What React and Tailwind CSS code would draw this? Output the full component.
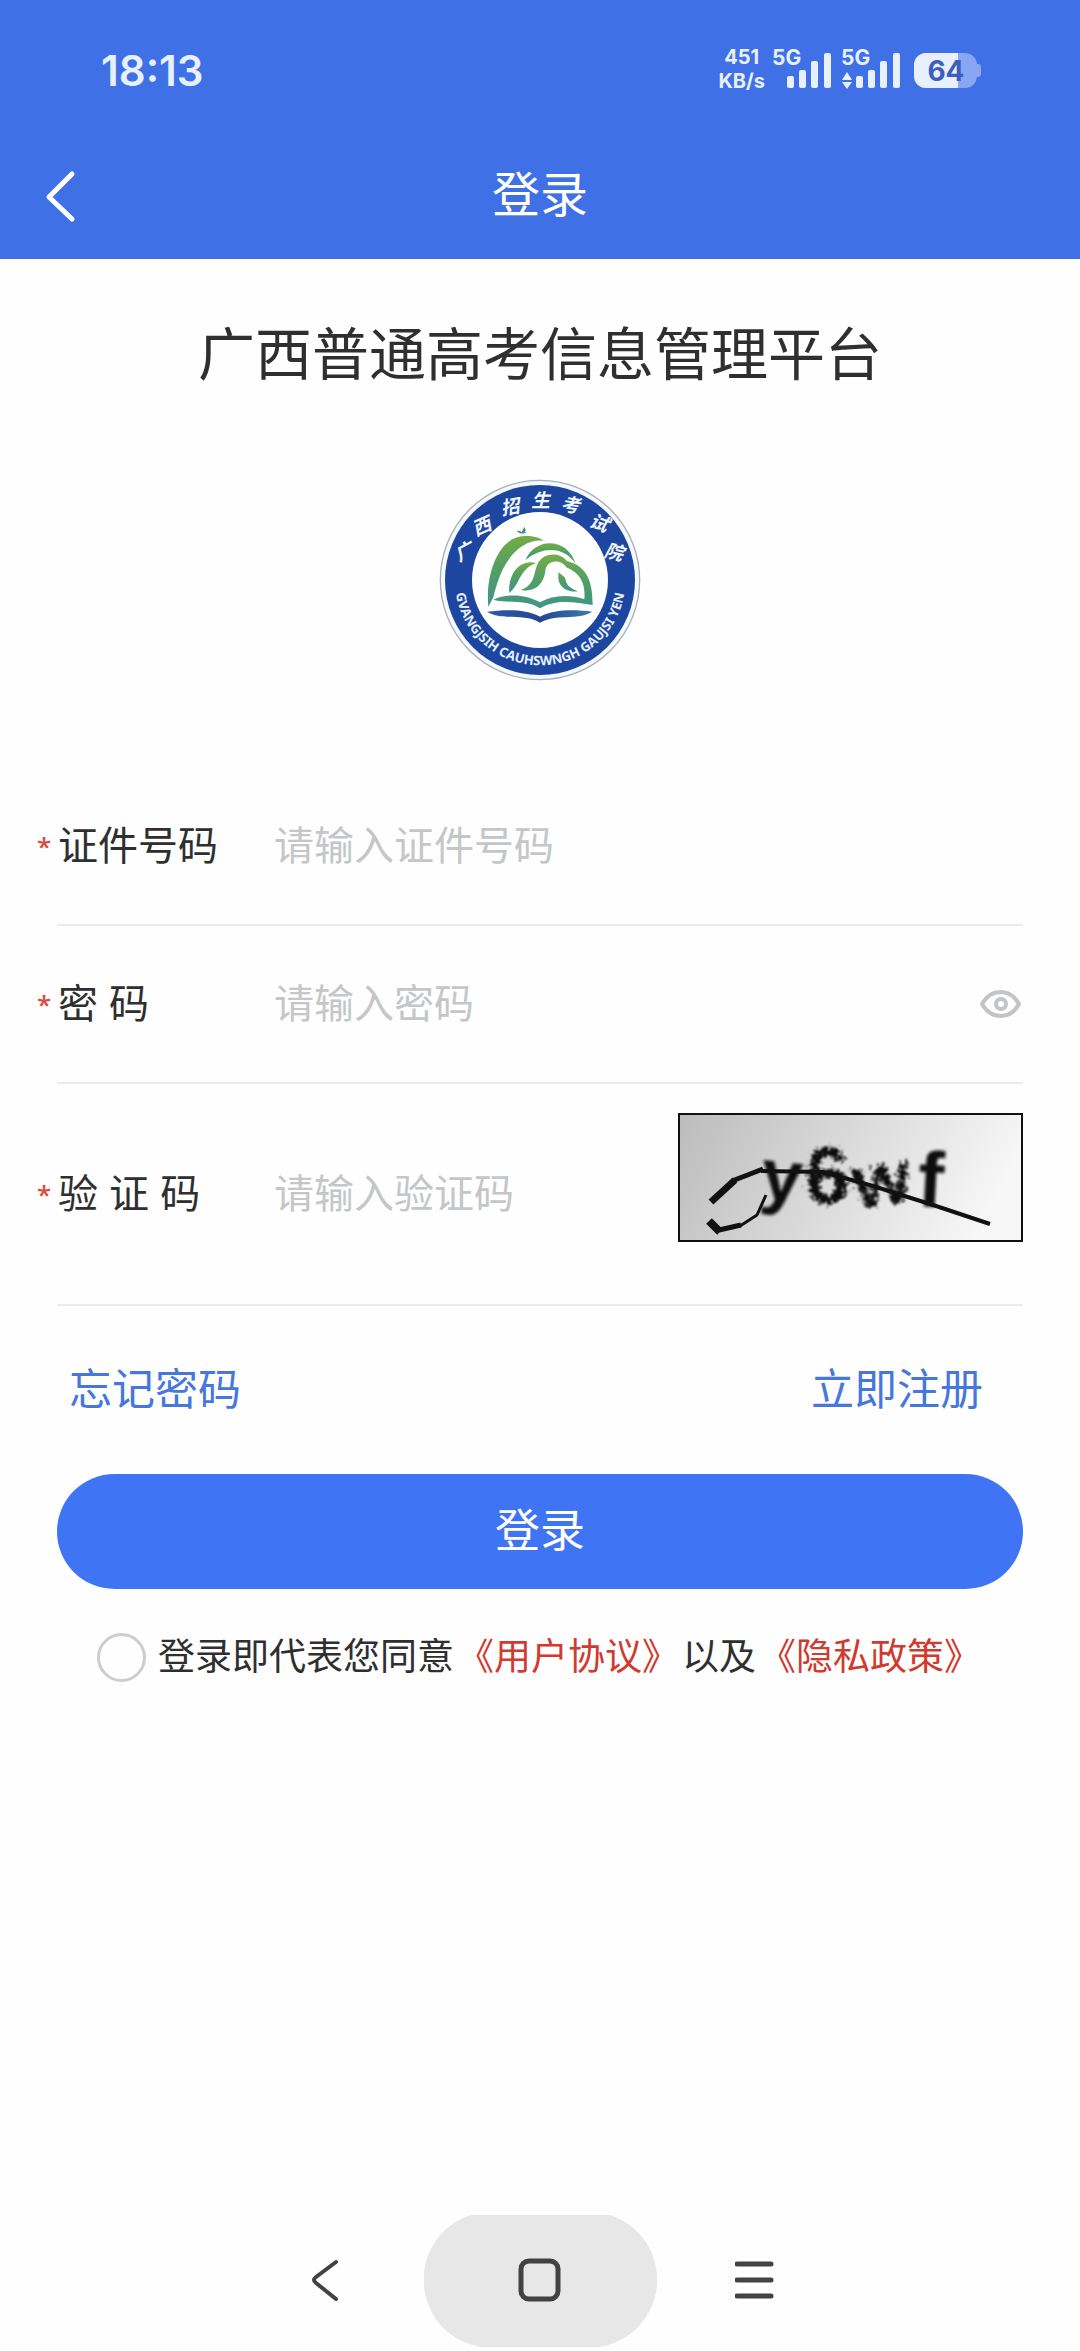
import React, { useState } from "react"

const EMBLEM_CHARS = [
  { char: "广", x: 133, y: 276, rotate: -28 },
  { char: "西", x: 186, y: 200, rotate: -24 },
  { char: "招", x: 271, y: 142, rotate: -10 },
  { char: "生", x: 363, y: 121, rotate: 0 },
  { char: "考", x: 452, y: 136, rotate: 8 },
  { char: "试", x: 538, y: 190, rotate: 20 },
  { char: "院", x: 583, y: 277, rotate: 14 },
]

function Signal({ active }) {
  return (
    <svg viewBox="0 0 62 44" className="h-11 w-[62px]" fill="#e8f0ff" aria-hidden="true">
      <text x="0" y="20" fontSize="21" fontWeight="700" fontFamily="Inter, sans-serif">5G</text>
      {active && <path d="M6 27l5 8H1zM6 44l-5-7h10z" />}
      <rect x="15" y="31" width="7" height="12" rx="2" />
      <rect x="27" y="25" width="7" height="18" rx="2" />
      <rect x="39" y="16" width="7" height="27" rx="2" />
      <rect x="52" y="8" width="7" height="35" rx="2" />
    </svg>
  )
}

function Battery() {
  return (
    <svg viewBox="0 -8 68 44" className="ml-1 h-11 w-[68px]" aria-hidden="true">
      <rect x="60" y="11" width="7" height="13" rx="3" fill="#89a6f2" />
      <rect x="0" y="0" width="63" height="35" rx="12" fill="#89a6f2" />
      <path d="M12 0h32v35H12A12 12 0 0 1 0 23V12A12 12 0 0 1 12 0z" fill="#e8f0ff" />
      <text x="32" y="28" textAnchor="middle" fontSize="28" fontWeight="700" fontFamily="Inter, sans-serif" fill="#3c5fbd">64</text>
    </svg>
  )
}

function Emblem() {
  return (
    <svg viewBox="58 58 606 606" className="w-[202px] h-[202px]" role="img" aria-label="广西招生考试院">
      <defs>
        <linearGradient id="hill" x1="0" y1="0" x2="0" y2="1">
          <stop offset="0" stopColor="#74ad45" />
          <stop offset="0.4" stopColor="#55a061" />
          <stop offset="1" stopColor="#3f9488" />
        </linearGradient>
        <linearGradient id="page" x1="0" y1="0" x2="1" y2="0">
          <stop offset="0" stopColor="#2c5cae" />
          <stop offset="0.5" stopColor="#24458f" />
          <stop offset="1" stopColor="#3a7fae" />
        </linearGradient>
        <path id="ring" d="M105 361A256 256 0 0 0 617 361" />
      </defs>
      <circle cx="361" cy="361" r="299" fill="#f3f9ff" stroke="#a9b0b3" strokeWidth="4" />
      <circle cx="361" cy="361" r="285" fill="#1d46a0" />
      <circle cx="361" cy="361" r="204" fill="#fff" />

      {EMBLEM_CHARS.map(({ char, x, y, rotate }) => (
        <text
          key={char}
          x={x}
          y={y + 20}
          transform={`rotate(${rotate} ${x} ${y})`}
          textAnchor="middle"
          fontSize="56"
          fontStyle="italic"
          fontWeight="700"
          fontFamily="'Noto Sans CJK SC', sans-serif"
          fill="#f1f6ff"
        >
          {char}
        </text>
      ))}
      <text fontSize="39" fontWeight="700" fontFamily="'Noto Sans', sans-serif" fill="#e6f0ff" textAnchor="middle">
        <textPath href="#ring" startOffset="50%">GVANGJSIH CAUHSWNGH GAUJSI YEN</textPath>
      </text>

      {/* Bird, hills and open book */}
      <path d="M290 213c8 0 13 1 17 4 1-6 4-11 9-15 0 5 0 8 3 10l-4 4 6 2c-12 7-20 4-31-5z" fill="#4c8f78" />
      <path d="M206 441C196 330 245 226 318 229c24 0 44 6 54 14-66-6-116 52-140 130-7 22-11 40-11 40z" fill="url(#hill)" />
      <path d="M317 301c30-70 126-68 151 11-34-50-96-55-151-11z" fill="url(#hill)" />
      <path d="M269 400c-4-56 30-102 80-90-34 12-44 38-58 62-6 12-14 20-22 28z" fill="url(#hill)" />
      <path d="M221 420c44-20 98-16 140 8 38-22 88-24 133-9 4-44-10-78-54-96-14-24-54-24-62 4-4 36-20 70-75 65 36-14 38-36 46-66 12-52 74-50 92-22 58 14 78 56 78 132-52-8-108-20-158 10-42-28-96-14-140-26z" fill="url(#hill)" />
      <path d="M417 337c8 10 20 12 21 24 2 14 14 26 37 34-36 4-66-16-58-58z" fill="url(#hill)" />
      <path d="M202 456c50-6 116-10 159 15 42-23 104-22 157-15-46 28-108 4-157 33-48-30-112-4-159-33z" fill="url(#page)" />
    </svg>
  )
}

function Captcha() {
  return (
    <svg viewBox="0 0 345 129" className="w-[345px] h-[129px]" role="img" aria-label="y6wf">
      <defs>
        <linearGradient id="paper" x1="0" y1="0.1" x2="1" y2="0.3">
          <stop offset="0" stopColor="#bdbdbd" />
          <stop offset="0.5" stopColor="#dadada" />
          <stop offset="1" stopColor="#f7f7f7" />
        </linearGradient>
        <filter id="rough" x="-20%" y="-20%" width="140%" height="140%">
          <feTurbulence type="fractalNoise" baseFrequency="0.3" numOctaves="2" seed="4" />
          <feDisplacementMap in="SourceGraphic" scale="16" xChannelSelector="R" yChannelSelector="G" />
          <feGaussianBlur stdDeviation="1.3" />
        </filter>
        <filter id="soft" x="-20%" y="-20%" width="140%" height="140%">
          <feGaussianBlur stdDeviation="1.4" />
        </filter>
      </defs>
      <rect x="1" y="1" width="343" height="127" fill="url(#paper)" stroke="#111" strokeWidth="2" />
      <g fontFamily="'Liberation Sans', sans-serif" fontWeight="700" fontSize="74" fill="#111">
        <text x="82" y="88" transform="rotate(6 102 76)" filter="url(#soft)">y</text>
        <text x="127" y="90" fontSize="80" filter="url(#rough)">6</text>
        <text x="175" y="92" transform="rotate(-8 203 70)" filter="url(#rough)">w</text>
        <text x="240" y="94" fontSize="78" transform="rotate(3 252 66)" filter="url(#soft)">f</text>
      </g>
      <g fill="none" stroke="#111" strokeLinejoin="round">
        <path d="M33 89L57 67" strokeWidth="7" />
        <path d="M54 68L85 56" strokeWidth="5" />
        <path d="M83 58l62 1 50 14 60 19 57 19" strokeWidth="4" />
        <path d="M31 108l11 11" strokeWidth="8" />
        <path d="M41 117l22-5" strokeWidth="5" />
        <path d="M62 113l17-11 9-20" strokeWidth="3" />
      </g>
    </svg>
  )
}

function Field({ id, label, type = "text", placeholder, tall, children }) {
  return (
    <div className={`relative flex items-center border-b-2 border-[#ececec] ${tall ? "h-[222px]" : "h-[158px]"}`}>
      <span className="absolute -left-5 text-[26px] leading-none font-semibold text-[#dc4a40] font-['Open_Sans',sans-serif]">*</span>
      <label htmlFor={id} className="w-[217px] shrink-0 whitespace-pre pl-px">{label}</label>
      <input
        id={id}
        type={type}
        placeholder={placeholder}
        className="min-w-0 flex-1 bg-transparent outline-none placeholder:text-[#c4c6c8]"
      />
      {children}
    </div>
  )
}

export default function App() {
  const [showPassword, setShowPassword] = useState(false)
  const [agreed, setAgreed] = useState(false)

  return (
    <div className="min-h-screen flex flex-col bg-[#fefefe] text-[#2f2f2f] font-['Liberation_Sans','Noto_Sans_CJK_SC',sans-serif]">
      <header className="bg-[#3f70e6] text-white">
        {/* Status bar */}
        <div className="flex h-[133px] items-center justify-between pl-[101px] pr-[98px] pt-2 text-[#e8f0ff] font-['Inter',sans-serif]">
          <span className="text-[42px] leading-none font-semibold">18:13</span>
          <div className="flex items-center gap-[7px] pb-2">
            <div className="pt-1 text-center text-[20px] leading-6 font-bold">
              <div>451</div>
              <div>KB/s</div>
            </div>
            <Signal />
            <Signal active />
            <Battery />
          </div>
        </div>

        <div className="grid h-[126px] grid-cols-3 items-center px-9">
          <button aria-label="返回" className="p-2">
            <svg viewBox="0 0 34 54" className="h-[54px] w-[34px]" fill="none" stroke="#fff" strokeWidth="5" strokeLinecap="round" strokeLinejoin="round">
              <path d="M28 5L5 28l23 22" />
            </svg>
          </button>
          <h1 className="text-center text-5xl leading-none">登录</h1>
        </div>
      </header>

      <main className="px-[57px]">
        <h2 className="mt-14 text-center text-[57px] leading-20">广西普通高考信息管理平台</h2>

        <div className="mt-[84px] flex justify-center">
          <Emblem />
        </div>

        <form className="mt-[87px] text-[40px]" onSubmit={(e) => e.preventDefault()}>
          <Field id="idNumber" label="证件号码" placeholder="请输入证件号码" />
          <Field id="password" label="密 码" type={showPassword ? "text" : "password"} placeholder="请输入密码">
            <button type="button" aria-label="显示密码" onClick={() => setShowPassword(!showPassword)}>
              <svg viewBox="0 0 46 32" className="h-8 w-[46px]" fill="none" stroke="#c2c4c6" strokeWidth="4">
                <path d="M5 16C9 9 15 4 24 4s14 5 18 12c-4 7-9 12-18 12S9 23 5 16z" strokeLinejoin="round" />
                <circle cx="24" cy="16" r="5" />
              </svg>
            </button>
          </Field>
          <Field id="captcha" label="验 证 码" placeholder="请输入验证码" tall>
            <button type="button" aria-label="换一张" className="mt-[29px] shrink-0 self-start">
              <Captcha />
            </button>
          </Field>

          <div className="mt-[54px] flex justify-between pl-3 pr-10 text-[43px] leading-15 text-[#4677dc]">
            <a href="#forgot">忘记密码</a>
            <a href="#register">立即注册</a>
          </div>

          <button type="submit" className="mt-[54px] h-[115px] w-full rounded-full bg-[#3f74f5] text-[45px] leading-none text-white">
            登录
          </button>

          <div className="mt-[43px] flex h-[50px] items-center pl-10 text-[37px] leading-none">
            <input
              id="agree"
              type="checkbox"
              checked={agreed}
              onChange={(e) => setAgreed(e.target.checked)}
              className="mr-3 h-[49px] w-[49px] shrink-0 appearance-none rounded-full border-3 border-[#cdcdcd] checked:border-[#3f74f5] checked:bg-[#3f74f5]"
            />
            <label htmlFor="agree">登录即代表您同意</label>
            <a href="#terms" className="mx-[3px] text-[#cf3b2f]">《用户协议》</a>
            <span>以及</span>
            <a href="#privacy" className="mx-[3px] text-[#cf3b2f]">《隐私政策》</a>
          </div>
        </form>
      </main>

      {/* System navigation */}
      <nav className="mt-auto flex items-center justify-center gap-14 pb-1">
        <button aria-label="后退" className="flex w-21 justify-center">
          <svg viewBox="0 0 28 44" className="h-11 w-7" fill="none" stroke="#424242" strokeWidth="4" strokeLinecap="round" strokeLinejoin="round">
            <path d="M24 3L4 18q-4 3 0 6l20 16" />
          </svg>
        </button>
        <button aria-label="主屏幕">
          <svg viewBox="0 0 233 132" className="h-[132px] w-[233px]">
            <path d="M47 0h139a68 68 0 0 1-11 132H57A68 68 0 0 1 47 0z" fill="#e7e7e7" />
            <rect x="97" y="46" width="37" height="38" rx="8" fill="none" stroke="#424242" strokeWidth="5" />
          </svg>
        </button>
        <button aria-label="最近任务" className="flex w-21 justify-center">
          <svg viewBox="0 0 40 44" className="h-11 w-10" fill="none" stroke="#424242" strokeWidth="5" strokeLinecap="round">
            <path d="M2 5h34M2 21h34M2 37h34" />
          </svg>
        </button>
      </nav>
    </div>
  )
}
